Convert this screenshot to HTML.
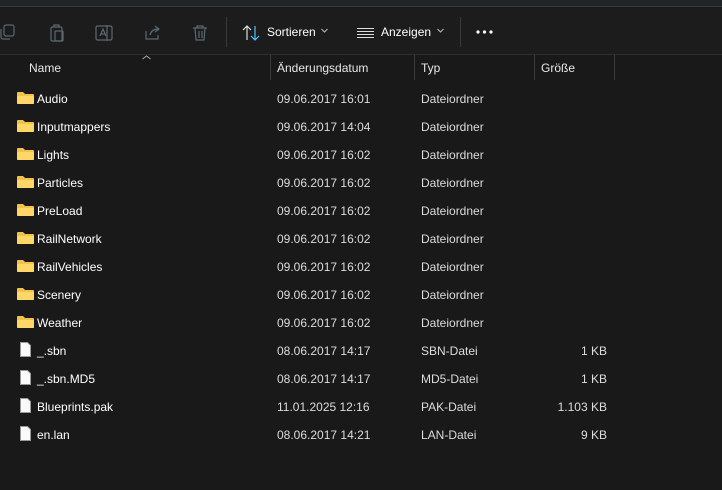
<!DOCTYPE html>
<html><head><meta charset="utf-8"><style>
*{margin:0;padding:0;box-sizing:border-box}
body{width:722px;height:490px;background:#191919;font-family:"Liberation Sans",sans-serif;font-size:12px;color:#fff;position:relative;overflow:hidden}
.top{position:absolute;left:0;top:0;width:722px;height:7px;background:#1f2528;border-bottom:1px solid #3a3a3a}
.tb{position:absolute;left:0;top:8px;width:722px;height:47px;background:#1c1c1c;border-bottom:1px solid #2f2f2f}
.abs{position:absolute}
.sep{position:absolute;width:1px;background:#3a3a3a}
.hdr{position:absolute;top:61px;font-size:12px;color:#e8e8e8}
.row{position:absolute;left:0;width:722px;height:28px}
.row span{position:absolute;top:8px;color:#fff}
.row .d{left:277px;color:#dcdcdc}
.row .t{left:421px;color:#dcdcdc}
.row .s{right:115px;color:#dcdcdc}
.fold{position:absolute;left:17px;top:7px;width:17px;height:13px}
.file{position:absolute;left:20px;top:6px;width:11px;height:15px}
.chev{position:absolute;top:20px;width:7px;height:5px}
</style></head><body>
<div class="top"></div>
<div class="tb">
<svg class="abs" style="left:0;top:15px" width="220" height="20" fill="none" stroke="#5a6a70" stroke-width="1.2">
<rect x="4" y="2" width="10" height="11" rx="2"/><path d="M1 6v8a2 2 0 0 0 2 2h7"/>
<rect x="51" y="4" width="11" height="14" rx="1.5"/><path d="M54 4V2h5v2"/><rect x="55" y="8" width="8" height="10" rx="1"/>
<rect x="96" y="3" width="16" height="14" rx="1.5"/><path d="M100 13l3-7 3 7M101 11h4M107 2v16"/>
<path d="M146 8v8h12v-4M150 12c1-4 4-6 8-6M155 3l4 3-4 3"/>
<path d="M193 5h14M197 5V3h6v2M195 5l1 12h8l1-12M199 8v7M202 8v7"/>
</svg>
<div class="sep" style="left:226px;top:9px;height:30px"></div>
<svg class="abs" style="left:242px;top:16px" width="20" height="18" fill="none" stroke-width="1.2"><path d="M5 16V2M1 6l4-4 4 4" stroke="#ddd"/><path d="M13 2v14M9 12l4 4 4-4" stroke="#4cc2ff"/></svg>
<div class="abs" style="left:267px;top:17px;font-size:12px">Sortieren</div>
<svg class="chev" style="left:321px" fill="none" stroke="#bbb" stroke-width="1"><path d="M0.5 1l3 3 3-3"/></svg>
<svg class="abs" style="left:357px;top:19px" width="18" height="12" stroke="#ddd" stroke-width="1"><path d="M0 1.5h17M0 4.5h17M0 7.5h17M0 10.5h17"/></svg>
<div class="abs" style="left:381px;top:17px;font-size:12px">Anzeigen</div>
<svg class="chev" style="left:437px" fill="none" stroke="#bbb" stroke-width="1"><path d="M0.5 1l3 3 3-3"/></svg>
<div class="sep" style="left:460px;top:9px;height:30px"></div>
<svg class="abs" style="left:476px;top:22px" width="20" height="4" fill="#fff"><circle cx="2" cy="2" r="1.6"/><circle cx="8.5" cy="2" r="1.6"/><circle cx="15" cy="2" r="1.6"/></svg>
</div>
<svg class="abs" style="left:142px;top:55px" width="9" height="5" fill="none" stroke="#aaa" stroke-width="1"><path d="M0.5 4l4-3 4 3"/></svg>
<div class="hdr" style="left:29px">Name</div>
<div class="hdr" style="left:277px">Änderungsdatum</div>
<div class="hdr" style="left:421px">Typ</div>
<div class="hdr" style="left:541px">Größe</div>
<div class="sep" style="left:270px;top:55px;height:25px"></div>
<div class="sep" style="left:414px;top:55px;height:25px"></div>
<div class="sep" style="left:534px;top:55px;height:25px"></div>
<div class="sep" style="left:614px;top:55px;height:25px"></div>

<div class="row" style="top:84px"><svg class="fold"><path d="M0 2a1 1 0 0 1 1-1h5l2 2h8a1 1 0 0 1 1 1v8a1 1 0 0 1-1 1H1a1 1 0 0 1-1-1z" fill="#f2c14e"/><path d="M0 5h17v7a1 1 0 0 1-1 1H1a1 1 0 0 1-1-1z" fill="#ffd766"/></svg><span style="left:37px">Audio</span><span class="d">09.06.2017 16:01</span><span class="t">Dateiordner</span></div>
<div class="row" style="top:112px"><svg class="fold"><path d="M0 2a1 1 0 0 1 1-1h5l2 2h8a1 1 0 0 1 1 1v8a1 1 0 0 1-1 1H1a1 1 0 0 1-1-1z" fill="#f2c14e"/><path d="M0 5h17v7a1 1 0 0 1-1 1H1a1 1 0 0 1-1-1z" fill="#ffd766"/></svg><span style="left:37px">Inputmappers</span><span class="d">09.06.2017 14:04</span><span class="t">Dateiordner</span></div>
<div class="row" style="top:140px"><svg class="fold"><path d="M0 2a1 1 0 0 1 1-1h5l2 2h8a1 1 0 0 1 1 1v8a1 1 0 0 1-1 1H1a1 1 0 0 1-1-1z" fill="#f2c14e"/><path d="M0 5h17v7a1 1 0 0 1-1 1H1a1 1 0 0 1-1-1z" fill="#ffd766"/></svg><span style="left:37px">Lights</span><span class="d">09.06.2017 16:02</span><span class="t">Dateiordner</span></div>
<div class="row" style="top:168px"><svg class="fold"><path d="M0 2a1 1 0 0 1 1-1h5l2 2h8a1 1 0 0 1 1 1v8a1 1 0 0 1-1 1H1a1 1 0 0 1-1-1z" fill="#f2c14e"/><path d="M0 5h17v7a1 1 0 0 1-1 1H1a1 1 0 0 1-1-1z" fill="#ffd766"/></svg><span style="left:37px">Particles</span><span class="d">09.06.2017 16:02</span><span class="t">Dateiordner</span></div>
<div class="row" style="top:196px"><svg class="fold"><path d="M0 2a1 1 0 0 1 1-1h5l2 2h8a1 1 0 0 1 1 1v8a1 1 0 0 1-1 1H1a1 1 0 0 1-1-1z" fill="#f2c14e"/><path d="M0 5h17v7a1 1 0 0 1-1 1H1a1 1 0 0 1-1-1z" fill="#ffd766"/></svg><span style="left:37px">PreLoad</span><span class="d">09.06.2017 16:02</span><span class="t">Dateiordner</span></div>
<div class="row" style="top:224px"><svg class="fold"><path d="M0 2a1 1 0 0 1 1-1h5l2 2h8a1 1 0 0 1 1 1v8a1 1 0 0 1-1 1H1a1 1 0 0 1-1-1z" fill="#f2c14e"/><path d="M0 5h17v7a1 1 0 0 1-1 1H1a1 1 0 0 1-1-1z" fill="#ffd766"/></svg><span style="left:37px">RailNetwork</span><span class="d">09.06.2017 16:02</span><span class="t">Dateiordner</span></div>
<div class="row" style="top:252px"><svg class="fold"><path d="M0 2a1 1 0 0 1 1-1h5l2 2h8a1 1 0 0 1 1 1v8a1 1 0 0 1-1 1H1a1 1 0 0 1-1-1z" fill="#f2c14e"/><path d="M0 5h17v7a1 1 0 0 1-1 1H1a1 1 0 0 1-1-1z" fill="#ffd766"/></svg><span style="left:37px">RailVehicles</span><span class="d">09.06.2017 16:02</span><span class="t">Dateiordner</span></div>
<div class="row" style="top:280px"><svg class="fold"><path d="M0 2a1 1 0 0 1 1-1h5l2 2h8a1 1 0 0 1 1 1v8a1 1 0 0 1-1 1H1a1 1 0 0 1-1-1z" fill="#f2c14e"/><path d="M0 5h17v7a1 1 0 0 1-1 1H1a1 1 0 0 1-1-1z" fill="#ffd766"/></svg><span style="left:37px">Scenery</span><span class="d">09.06.2017 16:02</span><span class="t">Dateiordner</span></div>
<div class="row" style="top:308px"><svg class="fold"><path d="M0 2a1 1 0 0 1 1-1h5l2 2h8a1 1 0 0 1 1 1v8a1 1 0 0 1-1 1H1a1 1 0 0 1-1-1z" fill="#f2c14e"/><path d="M0 5h17v7a1 1 0 0 1-1 1H1a1 1 0 0 1-1-1z" fill="#ffd766"/></svg><span style="left:37px">Weather</span><span class="d">09.06.2017 16:02</span><span class="t">Dateiordner</span></div>
<div class="row" style="top:336px"><svg class="file"><path d="M0.5 0.5h7l3 3v11h-10z" fill="#fafafa" stroke="#999" stroke-width="1"/></svg><span style="left:37px">_.sbn</span><span class="d">08.06.2017 14:17</span><span class="t">SBN-Datei</span><span class="s">1 KB</span></div>
<div class="row" style="top:364px"><svg class="file"><path d="M0.5 0.5h7l3 3v11h-10z" fill="#fafafa" stroke="#999" stroke-width="1"/></svg><span style="left:37px">_.sbn.MD5</span><span class="d">08.06.2017 14:17</span><span class="t">MD5-Datei</span><span class="s">1 KB</span></div>
<div class="row" style="top:392px"><svg class="file"><path d="M0.5 0.5h7l3 3v11h-10z" fill="#fafafa" stroke="#999" stroke-width="1"/></svg><span style="left:37px">Blueprints.pak</span><span class="d">11.01.2025 12:16</span><span class="t">PAK-Datei</span><span class="s">1.103 KB</span></div>
<div class="row" style="top:420px"><svg class="file"><path d="M0.5 0.5h7l3 3v11h-10z" fill="#fafafa" stroke="#999" stroke-width="1"/></svg><span style="left:37px">en.lan</span><span class="d">08.06.2017 14:21</span><span class="t">LAN-Datei</span><span class="s">9 KB</span></div>
</body></html>
